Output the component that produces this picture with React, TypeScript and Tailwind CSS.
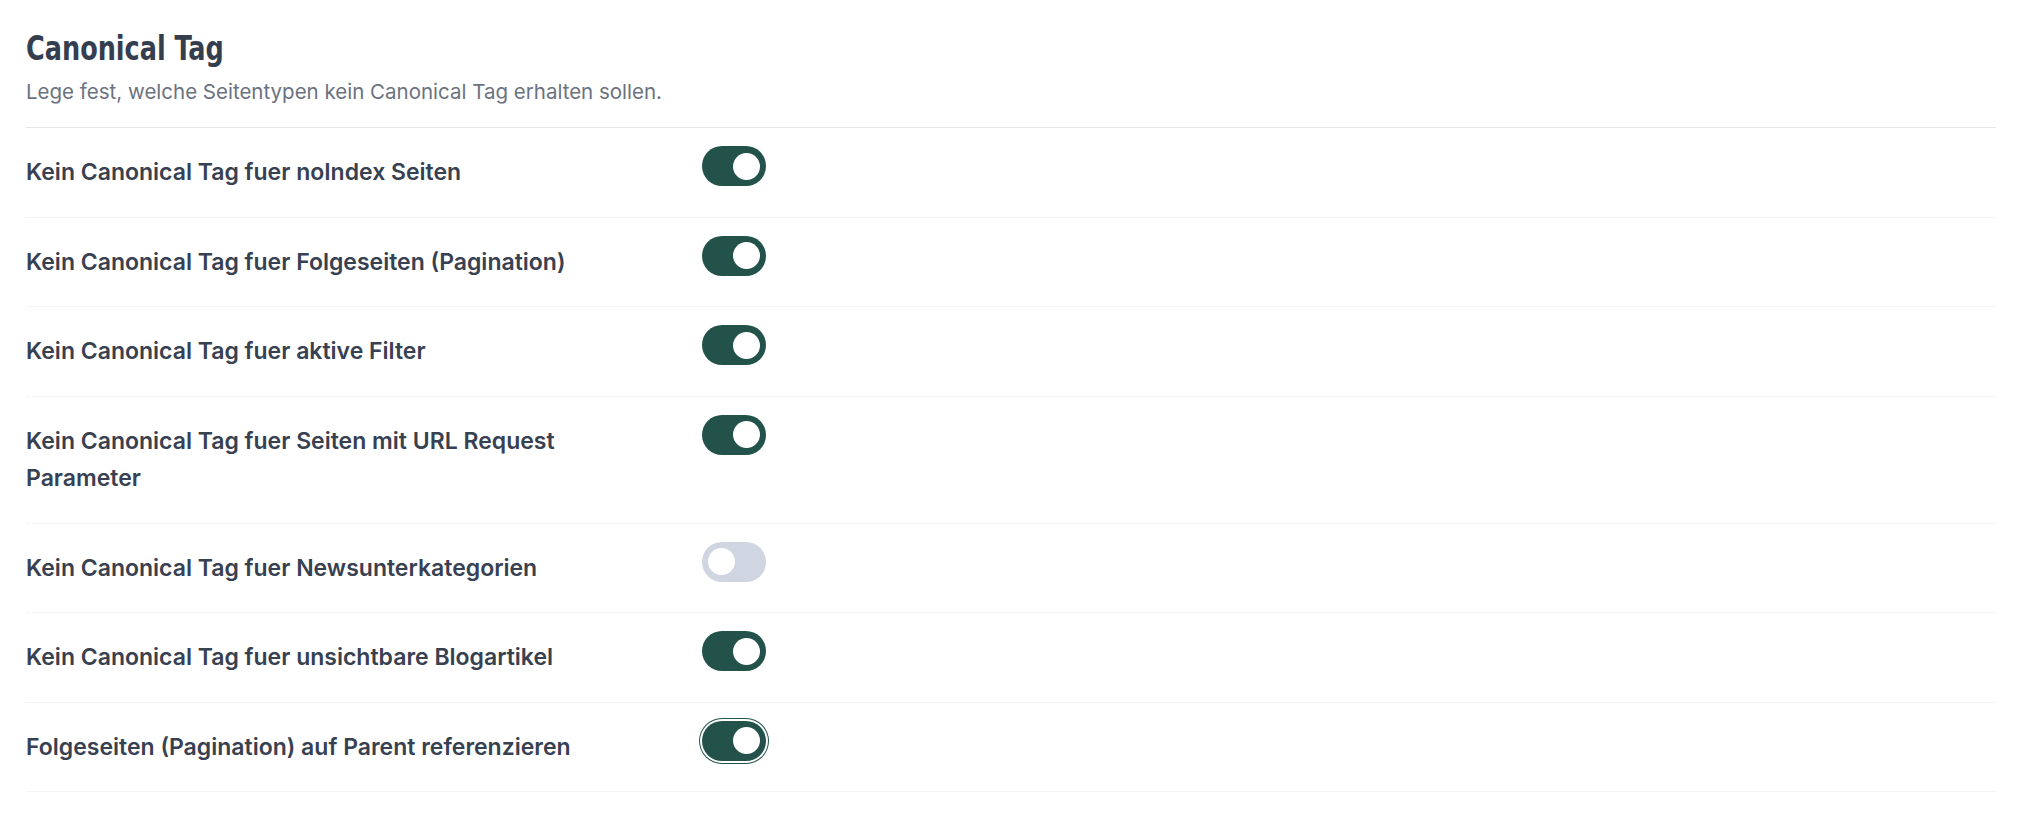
import { useState } from 'react';

// ============================================
// Canonical Tag settings
// ============================================

interface Setting {
    id: string;
    label: string;
    enabled: boolean;
}

const initialSettings: Setting[] = [
    { id: 'noindex', label: 'Kein Canonical Tag fuer noIndex Seiten', enabled: true },
    { id: 'pagination', label: 'Kein Canonical Tag fuer Folgeseiten (Pagination)', enabled: true },
    { id: 'filter', label: 'Kein Canonical Tag fuer aktive Filter', enabled: true },
    { id: 'request', label: 'Kein Canonical Tag fuer Seiten mit URL Request Parameter', enabled: true },
    { id: 'news', label: 'Kein Canonical Tag fuer Newsunterkategorien', enabled: false },
    { id: 'blog', label: 'Kein Canonical Tag fuer unsichtbare Blogartikel', enabled: true },
    { id: 'parent', label: 'Folgeseiten (Pagination) auf Parent referenzieren', enabled: true },
];

export default function App() {
    const [settings, setSettings] = useState(initialSettings);

    const toggle = (id: string) =>
        setSettings((prev) => prev.map((s) => (s.id === id ? { ...s, enabled: !s.enabled } : s)));

    return (
        <div className="min-h-screen bg-white px-[26px] pt-[30px] font-['Inter',sans-serif] text-[#374151]">
            {/* Header */}
            <div className="border-b border-[#e5e7eb] pb-[21px]">
                <h2 className="inline-block origin-left scale-x-[0.86] font-['DejaVu_Sans_Condensed','DejaVu_Sans',sans-serif] text-[33px] leading-[38px] font-bold text-[#343e4f]">
                    Canonical Tag
                </h2>
                <p className="mt-[10px] text-[20.5px] leading-[28px] text-[#6b7280]">
                    Lege fest, welche Seitentypen kein Canonical Tag erhalten sollen.
                </p>
            </div>

            {/* Rows */}
            <div>
                {settings.map((setting, index) => (
                    <div
                        key={setting.id}
                        className="flex items-start border-b border-[#f3f4f6] py-[19px]"
                    >
                        <div className="w-[676px] shrink-0 pr-[56px]">
                            <p className="pt-[7px] pb-[6px] text-[23px] leading-[37.5px] font-semibold text-[#374151]">
                                {setting.label}
                            </p>
                        </div>
                        <Switch
                            checked={setting.enabled}
                            focused={index === settings.length - 1}
                            onChange={() => toggle(setting.id)}
                        />
                    </div>
                ))}
            </div>
        </div>
    );
}

// ============================================
// Switch
// ============================================

interface SwitchProps {
    checked: boolean;
    focused?: boolean;
    onChange: () => void;
}

function Switch({ checked, focused, onChange }: SwitchProps) {
    return (
        <button
            type="button"
            role="switch"
            aria-checked={checked}
            onClick={onChange}
            className={`
        relative -mt-[1px] flex h-[40px] w-[64px] shrink-0 items-center rounded-full px-[6px] transition-colors
        ${checked ? 'bg-[#22524a]' : 'bg-[#cfd6e1]'}
        ${focused ? 'ring-1 ring-[#22524a] ring-offset-2' : ''}
      `}
        >
            <span
                className={`
          h-[27px] w-[27px] rounded-full bg-white transition-transform
          ${checked ? 'translate-x-[25px]' : 'translate-x-0'}
        `}
            />
        </button>
    );
}
